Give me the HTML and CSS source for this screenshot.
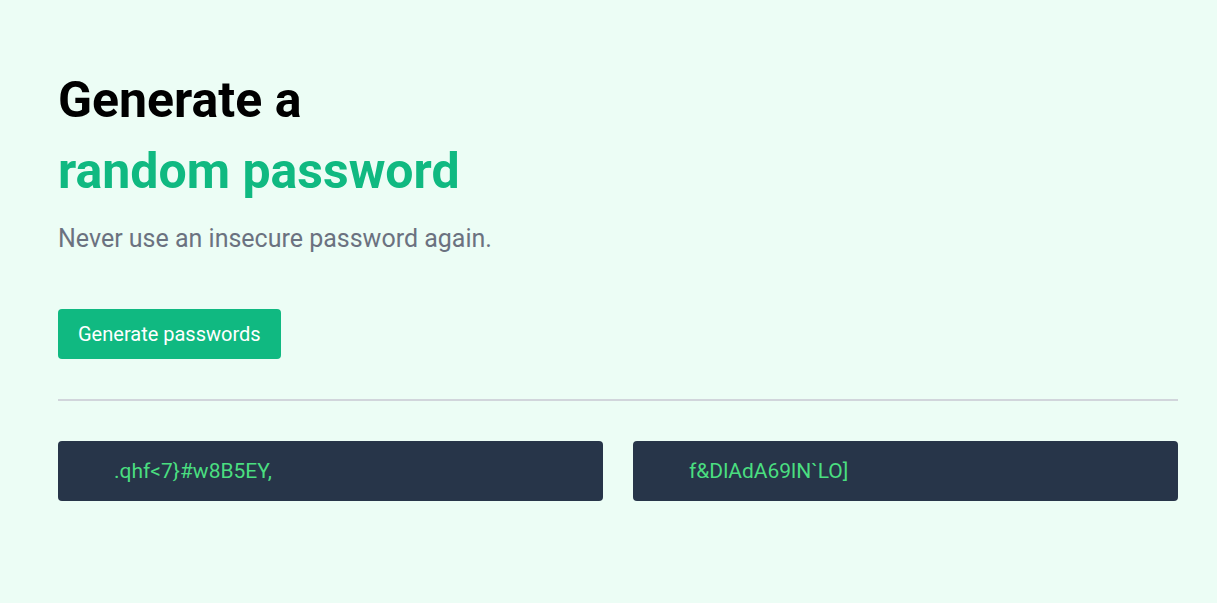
FILE: index.html
```html
<!DOCTYPE html>
<html>
<head>
<meta charset="utf-8">
<link rel="stylesheet" href="styles.css">
</head>
<body>
<main class="page">
  <h1 class="title">Generate a</h1>
  <h1 class="title accent">random password</h1>
  <p class="lead">Never use an insecure password again.</p>
  <button class="btn">Generate passwords</button>
  <hr class="divider">
  <div class="results">
    <div class="pw"><span>.qhf&lt;7}#w8B5EY,</span></div>
    <div class="pw"><span>f&amp;DlAdA69lN`LO]</span></div>
  </div>
</main>
</body>
</html>
```
FILE: styles.css
```css
html, body {
  margin: 0;
  padding: 0;
  background: #ecfdf5;
  font-family: Roboto, "Liberation Sans", sans-serif;
}
.page {
  padding: 65px 39px 0 58px;
}
.title {
  margin: 0;
  font-size: 50px;
  font-weight: 700;
  line-height: 71px;
  color: #000;
}
.title.accent {
  color: #10b981;
}
.lead {
  margin: 14px 0 0;
  font-size: 25px;
  line-height: 36px;
  color: #6b7280;
}
.btn {
  display: block;
  margin-top: 52px;
  height: 50px;
  padding: 0 20px;
  border: none;
  border-radius: 4px;
  background: #10b981;
  color: #fff;
  font-family: Roboto, "Liberation Sans", sans-serif;
  font-size: 20px;
}
.divider {
  margin: 40px 0 0;
  border: none;
  border-top: 2px solid #d1d5db;
}
.results {
  margin-top: 40px;
  display: grid;
  grid-template-columns: 1fr 1fr;
  gap: 30px;
}
.pw {
  height: 60px;
  border-radius: 4px;
  background: #273549;
  display: flex;
  align-items: center;
  padding-left: 56px;
  color: #4ade80;
  font-size: 21px;
}
```
